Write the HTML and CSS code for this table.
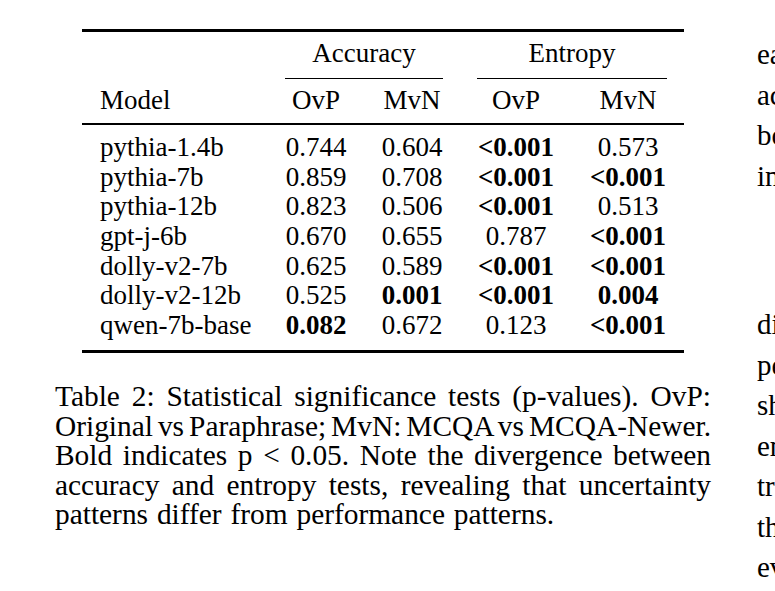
FILE: index.html
```html
<!DOCTYPE html>
<html lang="en">
<head>
<meta charset="utf-8">
<title>Table 2</title>
<link rel="stylesheet" href="styles.css">
</head>
<body>
<div class="page">
  <div class="left">
    <table class="tbl">
      <colgroup>
        <col class="c-model"><col class="c-num"><col class="c-num"><col class="c-wide"><col class="c-wide">
      </colgroup>
      <thead>
        <tr class="grp">
          <th></th>
          <th colspan="2"><span class="cmid">Accuracy</span></th>
          <th colspan="2"><span class="cmid">Entropy</span></th>
        </tr>
        <tr class="sub">
          <th class="name">Model</th><th>OvP</th><th>MvN</th><th>OvP</th><th>MvN</th>
        </tr>
      </thead>
      <tbody>
        <tr><td class="name">pythia-1.4b</td><td>0.744</td><td>0.604</td><td class="b">&lt;0.001</td><td>0.573</td></tr>
        <tr><td class="name">pythia-7b</td><td>0.859</td><td>0.708</td><td class="b">&lt;0.001</td><td class="b">&lt;0.001</td></tr>
        <tr><td class="name">pythia-12b</td><td>0.823</td><td>0.506</td><td class="b">&lt;0.001</td><td>0.513</td></tr>
        <tr><td class="name">gpt-j-6b</td><td>0.670</td><td>0.655</td><td>0.787</td><td class="b">&lt;0.001</td></tr>
        <tr><td class="name">dolly-v2-7b</td><td>0.625</td><td>0.589</td><td class="b">&lt;0.001</td><td class="b">&lt;0.001</td></tr>
        <tr><td class="name">dolly-v2-12b</td><td>0.525</td><td class="b">0.001</td><td class="b">&lt;0.001</td><td class="b">0.004</td></tr>
        <tr><td class="name">qwen-7b-base</td><td class="b">0.082</td><td>0.672</td><td>0.123</td><td class="b">&lt;0.001</td></tr>
      </tbody>
    </table>
    <p class="caption">
      <span class="ln">Table 2: Statistical significance tests (p-values). OvP:</span>
      <span class="ln tight">Original vs Paraphrase; MvN: MCQA vs MCQA-Newer.</span>
      <span class="ln">Bold indicates p &lt; 0.05. Note the divergence between</span>
      <span class="ln">accuracy and entropy tests, revealing that uncertainty</span>
      <span class="ln last">patterns differ from performance patterns.</span>
    </p>
  </div>
  <div class="right">
    <div class="para">
      <span class="rl">each</span>
      <span class="rl">across</span>
      <span class="rl">both</span>
      <span class="rl">in</span>
    </div>
    <div class="para gap">
      <span class="rl">differ</span>
      <span class="rl">performance</span>
      <span class="rl">show</span>
      <span class="rl">entropy</span>
      <span class="rl">trends</span>
      <span class="rl">the</span>
      <span class="rl">evaluation</span>
    </div>
  </div>
</div>
</body>
</html>
```

FILE: styles.css
```css
* {
  box-sizing: border-box;
}

html,
body {
  margin: 0;
  padding: 0;
  background: #fff;
  overflow: hidden;
}

body {
  width: 775px;
  height: 591px;
  font-family: "Liberation Serif", "Times New Roman", serif;
  color: #000;
}

.page {
  display: flex;
  align-items: flex-start;
}

.left {
  flex: none;
  width: 711px;
  padding-left: 55px;
}

/* ---------- table ---------- */
.tbl {
  margin-top: 29px;
  margin-left: 27px;
  width: 602px;
  table-layout: fixed;
  border-collapse: separate;
  border-spacing: 0;
  font-size: 27px;
  line-height: 29.67px;
  border-top: 3px solid #000;
  border-bottom: 3px solid #000;
}

.c-model { width: 186px; }
.c-num { width: 96px; }
.c-wide { width: 112px; }

.tbl th,
.tbl td {
  padding: 0;
  font-weight: normal;
  text-align: center;
  white-space: nowrap;
}

.grp th {
  padding-top: 7.2px;
}

.cmid {
  display: block;
  margin: 0 17px;
  padding-bottom: 8.8px;
  border-bottom: 1px solid #000;
}

.sub th {
  padding-top: 7.3px;
  padding-bottom: 7.6px;
  border-bottom: 2px solid #000;
}

.tbl .name {
  text-align: left;
  padding-left: 18px;
}

tbody tr:first-child td {
  padding-top: 7.7px;
}

tbody tr:last-child td {
  padding-bottom: 9.3px;
}

.tbl .b {
  font-weight: bold;
}

/* ---------- caption ---------- */
.caption {
  margin: 29.4px 0 0;
  font-size: 29.4px;
  line-height: 29.5px;
}

.ln {
  display: block;
  text-align: justify;
  text-align-last: justify;
}

.ln.tight {
  word-spacing: -3px;
}

.ln.last {
  text-align-last: left;
  word-spacing: 1.5px;
}

/* ---------- right column (cut off by the page edge) ---------- */
.right {
  flex: none;
  margin-left: 46px;
  padding-top: 34px;
  font-size: 29px;
  line-height: 40.5px;
  white-space: nowrap;
}

.rl {
  display: block;
}

.gap {
  margin-top: 108px;
}
```
